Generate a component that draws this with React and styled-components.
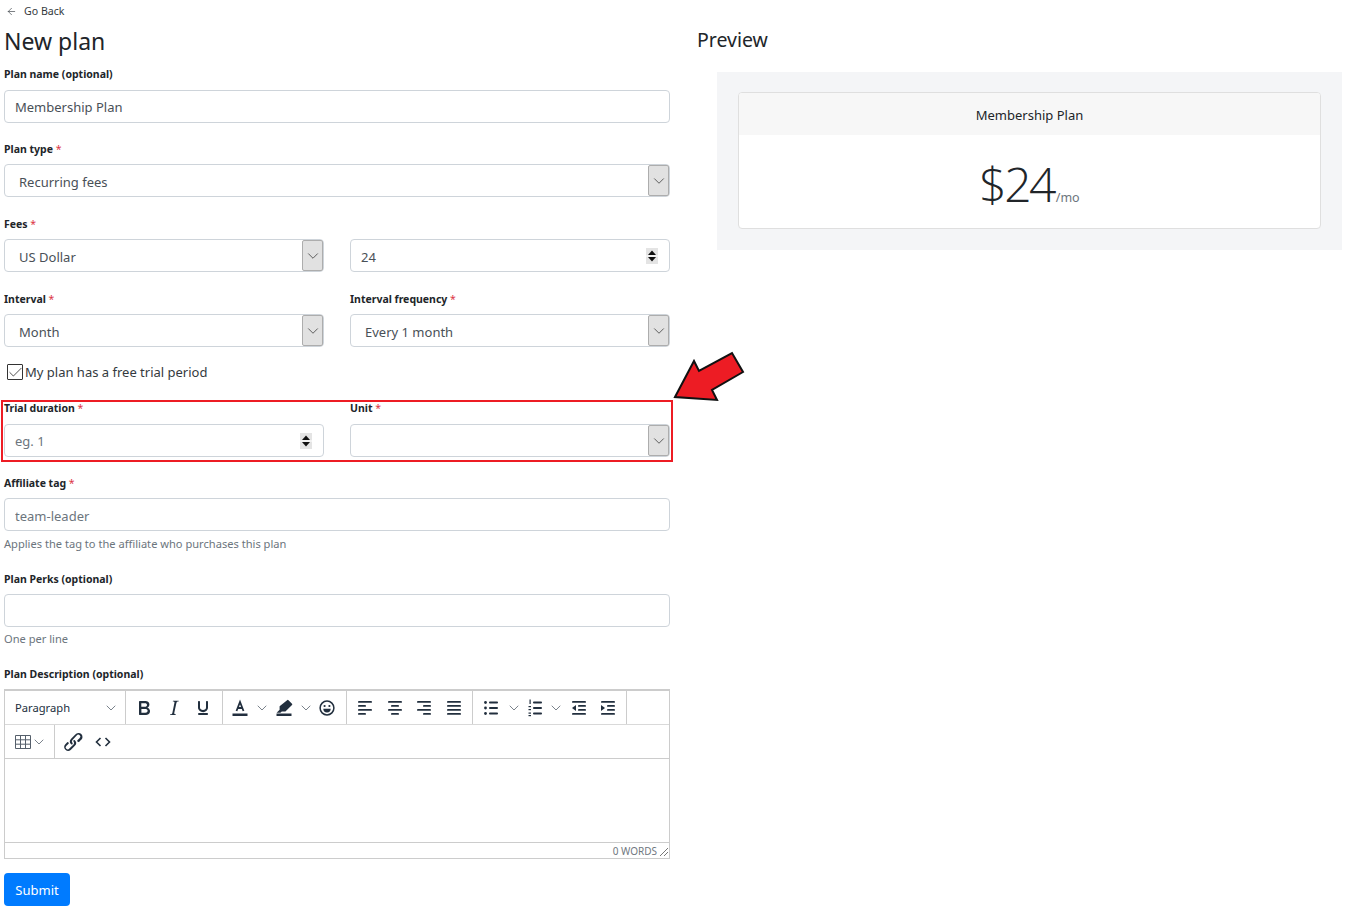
import * as React from 'react';
import styled, { createGlobalStyle } from 'styled-components';
import { ArrowLeft, ChevronDown, Check } from 'lucide-react';

const GlobalStyle = createGlobalStyle`
  * { box-sizing: border-box; }
  body {
    margin: 0;
    background: #fff;
    color: #212529;
    font-family: "Noto Sans", "Open Sans", sans-serif;
  }
`;

const Page = styled.div`
  display: flex;
  align-items: flex-start;
  gap: 27px;
  width: 1346px;
  padding: 0 4px;
`;

const FormColumn = styled.div`
  flex: 0 0 666px;
`;

const BackLink = styled.a`
  display: flex;
  align-items: center;
  gap: 7px;
  height: 22px;
  padding-left: 2px;
  font-size: 10.6px;
  color: #343a40;
`;

const Title = styled.h1`
  margin: 0;
  height: 43px;
  font-size: 23px;
  line-height: 39px;
  font-weight: 400;
`;

const Group = styled.div`
  position: relative;
  margin-bottom: ${({ $mb }) => $mb ?? 17}px;
`;

const Row = styled.div`
  display: grid;
  grid-template-columns: 320px 320px;
  column-gap: 26px;
`;

const Label = styled.label`
  display: block;
  height: 18px;
  margin-bottom: ${({ $mb }) => $mb ?? 7}px;
  font-size: 10.5px;
  line-height: 18px;
  font-weight: 700;
  color: #212529;

  em {
    font-style: normal;
    font-weight: 400;
    color: #dc3545;
  }
`;

const TextInput = styled.input`
  display: block;
  width: 100%;
  height: 33px;
  padding: ${({ $pt }) => $pt ?? 0}px 10px 0;
  border: 1px solid #ced4da;
  border-radius: 4px;
  outline: none;
  font: inherit;
  font-size: 13px;
  color: #495057;
  background: #fff;

  &::placeholder {
    color: #6c757d;
    opacity: 1;
  }
`;

const NumberBox = styled.div`
  display: flex;
  align-items: center;
  height: 33px;
  padding: 0 11px 0 10px;
  border: 1px solid #ced4da;
  border-radius: 4px;
`;

const BareInput = styled.input`
  flex: 1;
  min-width: 0;
  border: 0;
  outline: none;
  padding: ${({ $pt }) => $pt ?? 2}px 0 0;
  font: inherit;
  font-size: 13px;
  color: #495057;
  background: transparent;

  &::placeholder {
    color: #6c757d;
    opacity: 1;
  }
`;

const SelectBox = styled.div`
  display: flex;
  align-items: center;
  height: 33px;
  padding-left: 14px;
  border: 1px solid #ced4da;
  border-radius: 4px;
  font-size: 13px;
  color: #495057;
`;

const SelectText = styled.span`
  padding-top: 2px;
`;

const SelectButton = styled.span`
  display: flex;
  align-items: center;
  justify-content: center;
  flex: 0 0 21px;
  height: 31px;
  margin-left: auto;
  background: #e1e1e1;
  border: 1px solid #adadad;
  border-radius: 2px;
  color: #333;
`;

const CheckRow = styled.label`
  display: flex;
  align-items: center;
  gap: 2px;
  height: 18px;
  margin: 0 0 18px 3px;
  font-size: 13px;
  color: #343a40;
`;

const CheckMark = styled.span`
  display: flex;
  align-items: center;
  justify-content: center;
  width: 16px;
  height: 16px;
  border: 1px solid #333;
  border-radius: 1px;
  color: #333;

  svg {
    flex: 0 0 auto;
  }
`;

const Highlight = styled.div`
  position: absolute;
  top: 1px;
  left: -3px;
  right: -3px;
  bottom: -5px;
  border: 2px solid #ed1c24;
  pointer-events: none;
`;

const PointerArrow = styled.svg`
  position: absolute;
  top: -50px;
  right: -76px;
`;

const Help = styled.small`
  display: block;
  height: 18px;
  margin-top: ${({ $mt }) => $mt ?? 4}px;
  font-size: 11.1px;
  line-height: 18px;
  color: #6c757d;
`;

const Editor = styled.div`
  height: 170px;
  display: flex;
  flex-direction: column;
  border: 1px solid #ccc;
  border-top-width: 2px;
  margin-bottom: 14px;
`;

const ToolbarRow = styled.div`
  display: flex;
  height: 34px;
  flex: 0 0 34px;
  border-bottom: 1px solid ${({ $strong }) => ($strong ? '#ccc' : '#d9d9d9')};
`;

const ToolGroup = styled.div`
  display: flex;
  align-items: center;
  width: ${({ $w }) => $w}px;
  padding: 0 3px;
  border-right: ${({ $plain }) => ($plain ? '0' : '1px solid #ccc')};
`;

const ParagraphMenu = styled.div`
  display: flex;
  align-items: center;
  justify-content: space-between;
  width: 100%;
  padding: 0 3px 0 7px;
  font-size: 11.2px;
  color: #222f3e;
`;

const ToolButton = styled.span`
  display: flex;
  align-items: center;
  justify-content: center;
  flex: 0 0 ${({ $w }) => $w ?? 29.7}px;
  height: 28px;
  color: #222f3e;

  svg {
    fill: currentColor;
  }
`;

const MenuChevron = styled(ChevronDown)`
  flex: 0 0 auto;
  color: #4a5562;
`;

const TableChevron = styled(MenuChevron)`
  margin-left: -6px;
`;

const EditArea = styled.div`
  flex: 1;
  border-top: 1px solid #ccc;
  margin-top: -1px;
`;

const StatusBar = styled.div`
  display: flex;
  align-items: center;
  justify-content: flex-end;
  height: 16px;
  border-top: 1px solid #ccc;
  font-size: 10px;
  color: #6f7780;
`;

const SubmitButton = styled.button`
  display: block;
  width: 66px;
  height: 33px;
  border: 0;
  border-radius: 4px;
  background: #007bff;
  color: #fff;
  font: inherit;
  font-size: 13px;
`;

const PreviewColumn = styled.div`
  flex: 1;
`;

const PreviewTitle = styled.h2`
  margin: 0;
  height: 72px;
  padding-top: 24px;
  font-size: 19.5px;
  line-height: 32px;
  font-weight: 400;
`;

const PreviewPanel = styled.div`
  width: 625px;
  margin-left: 20px;
  padding: 20px 21px 21px;
  background: #f4f5f7;
`;

const PlanCard = styled.div`
  border: 1px solid #dfdfdf;
  border-radius: 4px;
  background: #fff;
  overflow: hidden;
`;

const PlanHeader = styled.div`
  height: 42px;
  background: #f7f7f7;
  text-align: center;
  font-size: 13px;
  line-height: 45px;
`;

const PlanBody = styled.div`
  height: 93px;
  display: flex;
  align-items: baseline;
  justify-content: center;
  padding-top: 17px;
  font-family: "Open Sans", sans-serif;
  font-weight: 300;
  font-size: 48px;
  letter-spacing: -2.6px;
  line-height: 64px;

  small {
    margin-left: 2px;
    font-family: "Noto Sans", sans-serif;
    font-size: 12.5px;
    font-weight: 400;
    letter-spacing: 0;
    color: #6c757d;
  }
`;

const Bars = ({ rows }) => (
  <svg width="24" height="24" viewBox="0 0 24 24">
    {rows.map(([x, y, w], i) => (
      <rect key={i} x={x} y={y} width={w} height="1.8" rx=".9" />
    ))}
  </svg>
);

const Bold = () => (
  <svg width="24" height="24" viewBox="0 0 24 24">
    <path d="M7.8 19c-.3 0-.5 0-.6-.2l-.2-.5V5.7c0-.2 0-.4.2-.5l.6-.2h5c1.5 0 2.7.3 3.5 1 .7.6 1.1 1.4 1.1 2.5a3 3 0 01-.6 1.9c-.4.6-1 1-1.6 1.2.4.1.9.3 1.3.6s.8.7 1 1.2c.4.4.5 1 .5 1.6 0 1.3-.4 2.3-1.3 3-.8.7-2.1 1-3.8 1H7.8zm5-8.3c.6 0 1.2-.1 1.6-.5.4-.3.6-.7.6-1.3 0-1.1-.8-1.7-2.3-1.7H9.3v3.5h3.4zm.5 6c.7 0 1.3-.1 1.7-.4.4-.4.6-.9.6-1.5s-.2-1-.7-1.4c-.4-.3-1-.4-2-.4H9.4v3.8h4z" />
  </svg>
);

const Italic = () => (
  <svg width="24" height="24" viewBox="0 0 24 24">
    <path d="M16.7 4.7l-.1.9h-.3c-.6 0-1 0-1.4.3-.3.3-.4.6-.5 1.1l-2.1 9.8v.6c0 .5.4.8 1.4.8h.2l-.2.8H8l.2-.8h.2c1.1 0 1.8-.5 2-1.5l2-9.8.1-.5c0-.6-.4-.8-1.4-.8h-.3l.2-.9h5.8z" />
  </svg>
);

const Underline = () => (
  <svg width="24" height="24" viewBox="0 0 24 24">
    <path d="M16 5c.6 0 1 .4 1 1v5.500a4 4 0 01-.4 1.800l-1 1.400a5.300 5.300 0 01-5.500 1 5 5 0 01-1.600-1c-.5-.4-.8-.9-1.100-1.400a4 4 0 01-.4-1.800V6c0-.6.4-1 1-1s1 .4 1 1v5.500c0 .3 0 .6.2 1l.6.7a3.300 3.300 0 002.200.8 3.400 3.400 0 002.200-.8c.3-.2.5-.4.6-.8l.2-.9V6c0-.6.4-1 1-1zM8 17h8c.6 0 1 .4 1 1s-.4 1-1 1H8a1 1 0 010-2z" />
  </svg>
);

const TextColor = () => (
  <svg width="24" height="24" viewBox="0 0 24 24">
    <path d="M8.500 15 12 6l3.500 9M9.800 12h4.400" fill="none" stroke="currentColor" strokeWidth="1.800" />
    <rect x="4.500" y="17.500" width="15" height="2.500" />
  </svg>
);

const Highlighter = () => (
  <svg width="24" height="24" viewBox="0 0 24 24">
    <path d="M16.500 4.200 20 7.700a1 1 0 0 1 0 1.400l-6.600 6.400H9.800l-1.400 1.200H4.600l3-3v-3.400l7.500-6.100a1 1 0 0 1 1.400 0z" />
    <rect x="4.500" y="17.500" width="15" height="2.500" />
  </svg>
);

const Emoji = () => (
  <svg width="24" height="24" viewBox="0 0 24 24">
    <circle cx="12" cy="12" r="6.900" fill="none" stroke="currentColor" strokeWidth="1.500" />
    <circle cx="9.600" cy="10" r="1.100" />
    <circle cx="14.400" cy="10" r="1.100" />
    <path d="M8.300 12.800h7.400a3.700 3.700 0 0 1-7.400 0z" />
  </svg>
);

const BulletList = () => (
  <svg width="24" height="24" viewBox="0 0 24 24">
    <circle cx="6.500" cy="6.500" r="1.400" />
    <circle cx="6.500" cy="12" r="1.400" />
    <circle cx="6.500" cy="17.500" r="1.400" />
    <rect x="10" y="5.600" width="9" height="1.800" rx=".9" />
    <rect x="10" y="11.100" width="9" height="1.800" rx=".9" />
    <rect x="10" y="16.600" width="9" height="1.800" rx=".9" />
  </svg>
);

const NumberList = () => (
  <svg width="24" height="24" viewBox="0 0 24 24">
    <rect x="6.500" y="3.500" width="1.200" height="4.500" />
    <rect x="5.500" y="10" width="2.500" height="1.200" />
    <rect x="5.500" y="13" width="2.500" height="1.200" />
    <rect x="5.500" y="16.500" width="2.500" height="1.200" />
    <rect x="5.500" y="19" width="2.500" height="1.200" />
    <rect x="10" y="5.600" width="9" height="1.800" rx=".9" />
    <rect x="10" y="11.100" width="9" height="1.800" rx=".9" />
    <rect x="10" y="16.600" width="9" height="1.800" rx=".9" />
  </svg>
);

const Indent = ({ out }) => (
  <svg width="24" height="24" viewBox="0 0 24 24">
    <rect x="5" y="5" width="14" height="1.800" rx=".9" />
    <rect x="11" y="9" width="8" height="1.800" rx=".9" />
    <rect x="11" y="13" width="8" height="1.800" rx=".9" />
    <rect x="5" y="17" width="14" height="1.800" rx=".9" />
    <path d={out ? 'M9 9v6l-4-3z' : 'M5 9v6l4-3z'} />
  </svg>
);

const TableGrid = () => (
  <svg width="24" height="24" viewBox="0 0 24 24">
    <path
      d="M4.500 5.500h15v13h-15zM4.500 9.800h15M4.500 14.200h15M9.500 5.500v13M14.500 5.500v13"
      fill="none"
      stroke="#555f6b"
      strokeWidth="1"
    />
  </svg>
);

const ChainLink = () => (
  <svg width="24" height="24" viewBox="0 0 24 24">
    <path d="M6.200 12.300a1 1 0 011.400 1.400l-2.100 2.100a2 2 0 102.800 2.800l4.200-4.200a2 2 0 000-2.800 1 1 0 011.400-1.400 4 4 0 010 5.600l-4.200 4.200a4 4 0 01-5.600-5.600l2.100-2.100zm11.600-.6a1 1 0 01-1.400-1.400l2.100-2.100a2 2 0 10-2.800-2.800L11.500 10.100a2 2 0 000 2.800 1 1 0 01-1.400 1.400 4 4 0 010-5.600l4.200-4.200a4 4 0 115.600 5.600l-2.100 2.100z" />
  </svg>
);

const CodeIcon = () => (
  <svg width="24" height="24" viewBox="0 0 24 24">
    <path d="M9.500 8 5.500 12l4 4M14.500 8l4 4-4 4" fill="none" stroke="currentColor" strokeWidth="1.600" />
  </svg>
);

const Spinner = () => (
  <svg width="12" height="16" viewBox="0 0 12 16">
    <rect width="12" height="16" fill="#e4e4e4" />
    <path d="M6 2.500 10 7H2z" fill="#111" />
    <path d="M6 13.500 10 9H2z" fill="#111" />
    <rect y="7.500" width="12" height="1" fill="#fff" />
  </svg>
);

const Select = ({ value }) => (
  <SelectBox>
    <SelectText>{value}</SelectText>
    <SelectButton>
      <ChevronDown size={18} strokeWidth={1} />
    </SelectButton>
  </SelectBox>
);

const Required = () => <em> *</em>;

const Chevron = () => <MenuChevron size={16} strokeWidth={1.1} />;

const App = () => {
  return (
    <Page>
      <GlobalStyle />
      <FormColumn>
        <BackLink>
          <ArrowLeft size={11} strokeWidth={1.4} />
          Go Back
        </BackLink>
        <Title>New plan</Title>

        <Group>
          <Label>Plan name (optional)</Label>
          <TextInput defaultValue="Membership Plan" />
        </Group>
        <Group $mb={18}>
          <Label $mb={6}>Plan type<Required /></Label>
          <Select value="Recurring fees" />
        </Group>
        <Group $mb={18}>
          <Row>
            <div>
              <Label $mb={6}>Fees<Required /></Label>
              <Select value="US Dollar" />
            </div>
            <div>
              <Label $mb={6}>&nbsp;</Label>
              <NumberBox>
                <BareInput defaultValue="24" />
                <Spinner />
              </NumberBox>
            </div>
          </Row>
        </Group>
        <Group $mb={16}>
          <Row>
            <div>
              <Label $mb={6}>Interval<Required /></Label>
              <Select value="Month" />
            </div>
            <div>
              <Label $mb={6}>Interval frequency<Required /></Label>
              <Select value="Every 1 month" />
            </div>
          </Row>
        </Group>
        <CheckRow>
          <CheckMark>
            <Check size={17} strokeWidth={1.2} />
          </CheckMark>
          My plan has a free trial period
        </CheckRow>
        <Group>
          <Row>
            <div>
              <Label>Trial duration<Required /></Label>
              <NumberBox>
                <BareInput $pt={0} placeholder="eg. 1" />
                <Spinner />
              </NumberBox>
            </div>
            <div>
              <Label>Unit<Required /></Label>
              <Select value="" />
            </div>
          </Row>
          <Highlight />
          <PointerArrow width="76" height="54" viewBox="0 0 76 54">
            <path
              d="M5 48 24 12 29 22 62 4 73 23 42 41 47 51z"
              fill="#ed1c24"
              stroke="#111"
              strokeWidth="2"
            />
          </PointerArrow>
        </Group>
        <Group>
          <Label $mb={6}>Affiliate tag<Required /></Label>
          <TextInput $pt={2} placeholder="team-leader" />
          <Help>Applies the tag to the affiliate who purchases this plan</Help>
        </Group>
        <Group>
          <Label $mb={6}>Plan Perks (optional)</Label>
          <TextInput />
          <Help $mt={3}>One per line</Help>
        </Group>
        <Label $mb={6}>Plan Description (optional)</Label>
        <Editor>
          <ToolbarRow>
            <ToolGroup $w={121}>
              <ParagraphMenu>Paragraph<Chevron /></ParagraphMenu>
            </ToolGroup>
            <ToolGroup $w={97}>
              <ToolButton><Bold /></ToolButton>
              <ToolButton><Italic /></ToolButton>
              <ToolButton><Underline /></ToolButton>
            </ToolGroup>
            <ToolGroup $w={124}>
              <ToolButton $w={28}><TextColor /></ToolButton>
              <Chevron />
              <ToolButton $w={28}><Highlighter /></ToolButton>
              <Chevron />
              <ToolButton $w={26}><Emoji /></ToolButton>
            </ToolGroup>
            <ToolGroup $w={126}>
              <ToolButton><Bars rows={[[5, 5, 14], [5, 9, 8], [5, 13, 14], [5, 17, 8]]} /></ToolButton>
              <ToolButton><Bars rows={[[5, 5, 14], [8, 9, 8], [5, 13, 14], [8, 17, 8]]} /></ToolButton>
              <ToolButton><Bars rows={[[5, 5, 14], [11, 9, 8], [5, 13, 14], [11, 17, 8]]} /></ToolButton>
              <ToolButton><Bars rows={[[5, 5, 14], [5, 9, 14], [5, 13, 14], [5, 17, 14]]} /></ToolButton>
            </ToolGroup>
            <ToolGroup $w={154}>
              <ToolButton $w={30}><BulletList /></ToolButton>
              <Chevron />
              <ToolButton $w={26}><NumberList /></ToolButton>
              <Chevron />
              <ToolButton $w={29}><Indent out /></ToolButton>
              <ToolButton $w={29}><Indent /></ToolButton>
            </ToolGroup>
          </ToolbarRow>
          <ToolbarRow $strong>
            <ToolGroup $w={50}>
              <ToolButton $w={29}><TableGrid /></ToolButton>
              <TableChevron size={16} strokeWidth={1.1} />
            </ToolGroup>
            <ToolGroup $w={60} $plain>
              <ToolButton $w={30}><ChainLink /></ToolButton>
              <ToolButton $w={30}><CodeIcon /></ToolButton>
            </ToolGroup>
          </ToolbarRow>
          <EditArea />
          <StatusBar>
            0 WORDS
            <svg width="12" height="12" viewBox="0 0 12 12">
              <path d="M3 11 11 3M7 11l4-4" stroke="#777" strokeWidth="1" fill="none" />
            </svg>
          </StatusBar>
        </Editor>
        <SubmitButton>Submit</SubmitButton>
      </FormColumn>

      <PreviewColumn>
        <PreviewTitle>Preview</PreviewTitle>
        <PreviewPanel>
          <PlanCard>
            <PlanHeader>Membership Plan</PlanHeader>
            <PlanBody>
              $24<small>/mo</small>
            </PlanBody>
          </PlanCard>
        </PreviewPanel>
      </PreviewColumn>
    </Page>
  );
};

export default App;
